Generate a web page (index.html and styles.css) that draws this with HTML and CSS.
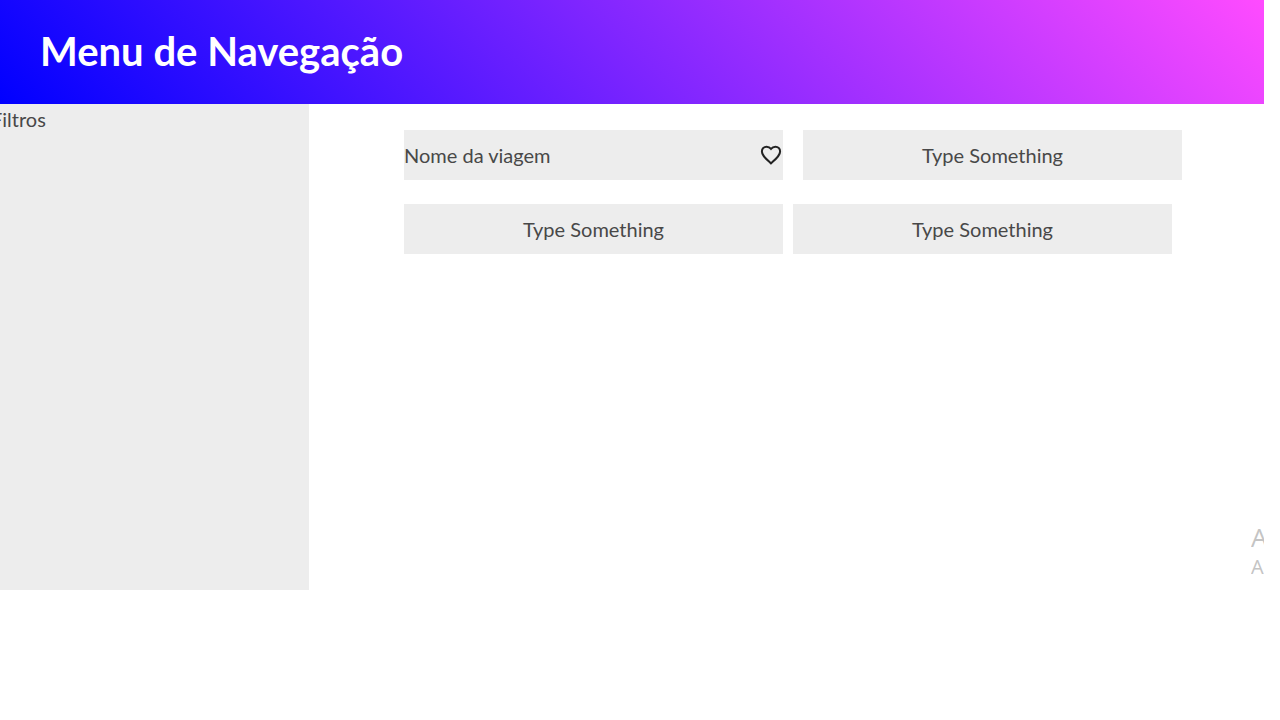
FILE: index.html
```html
<!DOCTYPE html>
<html lang="pt-BR">
<head>
<meta charset="utf-8">
<title>Menu de Navegação</title>
<link rel="stylesheet" href="styles.css">
</head>
<body>
<div class="page">
  <header class="header"><h1 class="title">Menu de Navegação</h1></header>
  <div class="layout">
    <aside class="filters">Filtros</aside>
    <main class="trips">
      <div class="row row-wide">
        <article class="card card-trip">
          <span>Nome da viagem</span>
          <button class="favorite" type="button" aria-label="Favoritar">
            <svg class="heart" viewBox="0 0 24 24" aria-hidden="true"><path d="M12 20.4 10.6 19.1C5.6 14.6 2.9 12 2.9 8.5 2.9 5.7 5 3.7 7.6 3.7c1.7 0 3.3.8 4.4 2.2 1.1-1.4 2.700-2.200 4.400-2.200 2.600 0 4.700 2 4.700 4.800 0 3.500-2.700 6.100-7.700 10.600Z"/></svg>
          </button>
        </article>
        <article class="card">Type Something</article>
      </div>
      <div class="row">
        <article class="card">Type Something</article>
        <article class="card">Type Something</article>
      </div>
    </main>
  </div>
  <div class="watermark"><span class="watermark-title">A</span><span>A</span></div>
</div>
</body>
</html>
```
FILE: styles.css
```css
* { box-sizing: border-box; }
body {
  margin: 0;
  background: #fff;
  color: #484848;
  font: 20px/24px Lato, sans-serif;
}
.page {
  position: relative;
  margin-right: 16px;
  overflow: hidden;
}
.header {
  padding: 27px 40px 29px;
  background: linear-gradient(45deg, #0000ff, #ff4bff);
  color: #fff;
}
.title {
  margin: 0;
  font-size: 40px;
  line-height: 48px;
  font-weight: 700;
}
.layout {
  display: flex;
}
.filters {
  flex: 0 0 calc(25% + 2px);
  min-height: 486px;
  margin-left: -9px;
  padding: 3px 0;
  background: #ededed;
}
.trips {
  flex: 1;
  padding: 26px 82px 0 95px;
}
.row {
  display: flex;
  gap: 10px;
  margin: 0 10px 24px 0;
}
.row-wide {
  gap: 20px;
  margin-right: 0;
}
.card {
  flex: 1;
  display: flex;
  align-items: center;
  justify-content: center;
  min-height: 50px;
  background: #ededed;
}
.card-trip { justify-content: space-between; }
.favorite {
  display: flex;
  margin: 0;
  padding: 0;
  border: 0;
  background: none;
  color: #222;
}
.heart {
  width: 24px;
  height: 24px;
  fill: none;
  stroke: currentColor;
  stroke-width: 2;
}
.watermark {
  position: absolute;
  right: 0;
  bottom: 11px;
  display: flex;
  flex-direction: column;
  width: 13px;
  overflow: hidden;
  color: #c4c4c4;
  font-family: "Open Sans", sans-serif;
}
.watermark-title {
  font-size: 26px;
  line-height: 36px;
}
```
